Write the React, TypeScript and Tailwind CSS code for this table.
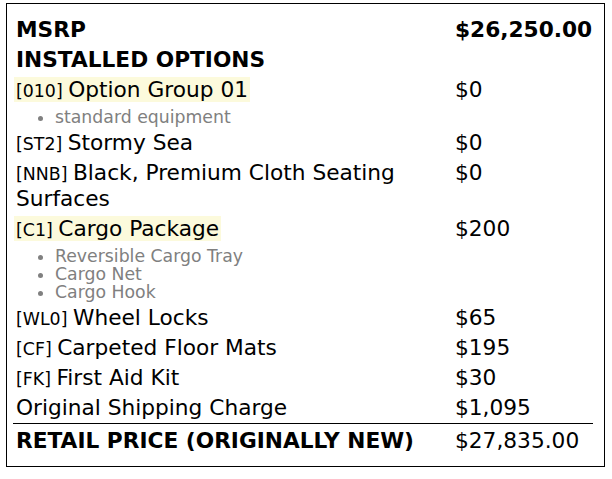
type Option = {
  code?: string
  name: string
  price: string
  highlight?: boolean
  details?: string[]
}

const options: Option[] = [
  { code: "010", name: "Option Group 01", price: "$0", highlight: true, details: ["standard equipment"] },
  { code: "ST2", name: "Stormy Sea", price: "$0" },
  { code: "NNB", name: "Black, Premium Cloth Seating Surfaces", price: "$0" },
  {
    code: "C1",
    name: "Cargo Package",
    price: "$200",
    highlight: true,
    details: ["Reversible Cargo Tray", "Cargo Net", "Cargo Hook"],
  },
  { code: "WL0", name: "Wheel Locks", price: "$65" },
  { code: "CF", name: "Carpeted Floor Mats", price: "$195" },
  { code: "FK", name: "First Aid Kit", price: "$30" },
  { name: "Original Shipping Charge", price: "$1,095" },
]

export default function App() {
  return (
    <div className="pl-[6px] pt-[3px] font-['DejaVu_Sans',sans-serif] text-black">
      <div className="w-[599px] h-[464px] border border-black bg-white pl-[6px] pt-[11px]">
        <table className="w-[580px] table-fixed border-collapse text-[21.7px] leading-[26px]">
          <colgroup>
            <col className="w-[441px]" />
            <col className="w-[139px]" />
          </colgroup>
          <tbody>
            <tr>
              <td className="px-[1px] py-[2px] align-top font-bold">
                <span className="px-[2px]">MSRP</span>
              </td>
              <td className="px-[1px] py-[2px] align-top font-bold">$26,250.00</td>
            </tr>
            <tr>
              <td className="px-[1px] py-[2px] align-top font-bold" colSpan={2}>
                <span className="px-[2px]">INSTALLED OPTIONS</span>
              </td>
            </tr>
            {options.map((o) => (
              <tr key={o.name}>
                <td className="px-[1px] py-[2px] align-top">
                  <span
                    className={
                      o.highlight
                        ? "px-[2px] box-decoration-clone bg-[#fcfadc]"
                        : "px-[2px] box-decoration-clone"
                    }
                  >
                    {o.code && <span className="text-[0.8em] leading-none">[{o.code}] </span>}
                    {o.name}
                  </span>
                  {o.details && (
                    <ul className="mt-[5px] list-disc pl-[41px] text-[17.3px] leading-[18px] text-[#808080]">
                      {o.details.map((d) => (
                        <li key={d}>{d}</li>
                      ))}
                    </ul>
                  )}
                </td>
                <td className="px-[1px] py-[2px] align-top">{o.price}</td>
              </tr>
            ))}
            <tr className="border-t border-black">
              <td className="px-[1px] pt-[4px] pb-[2px] align-top font-bold">
                <span className="px-[2px]">RETAIL PRICE (ORIGINALLY NEW)</span>
              </td>
              <td className="px-[1px] pt-[4px] pb-[2px] align-top">$27,835.00</td>
            </tr>
          </tbody>
        </table>
      </div>
    </div>
  )
}
